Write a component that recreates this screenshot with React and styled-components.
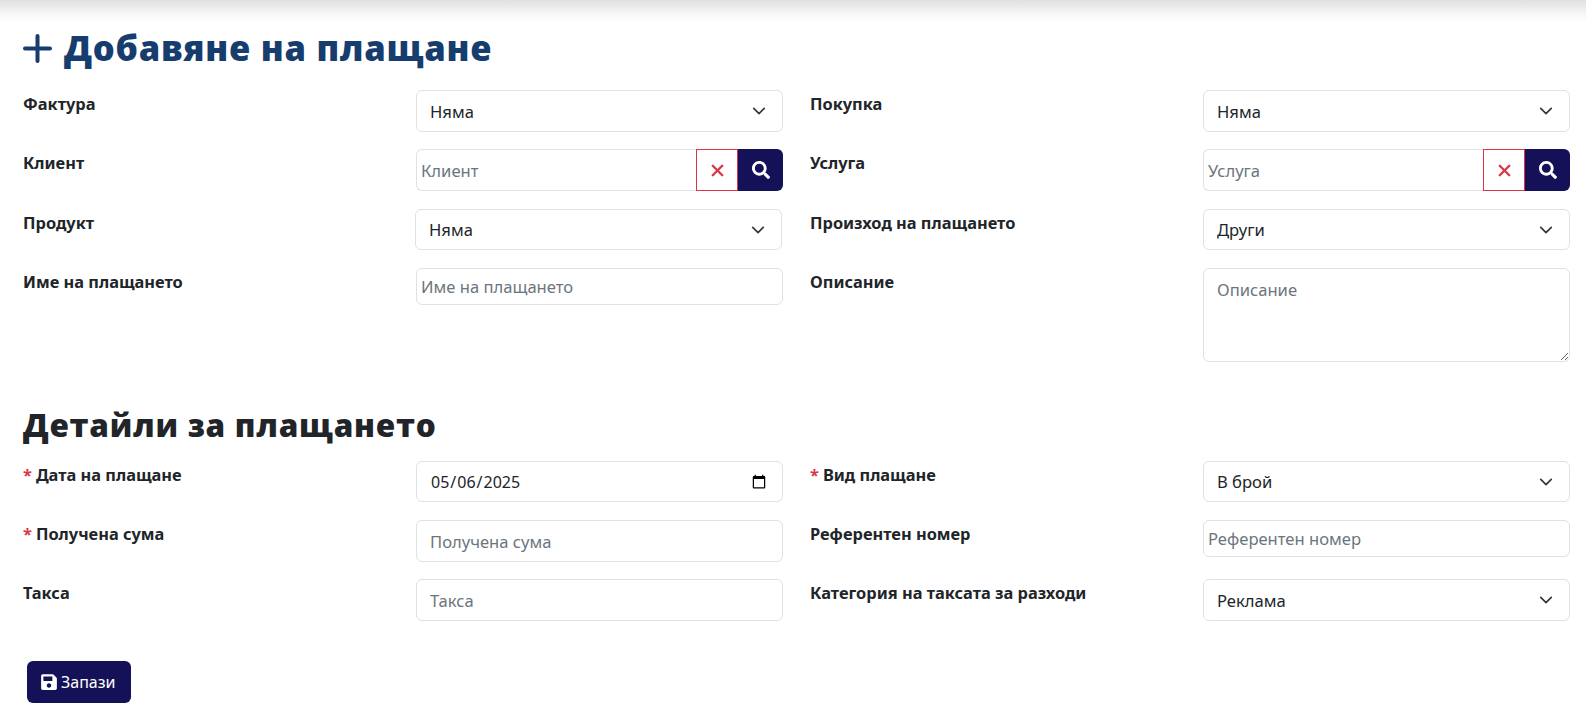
import React from 'react';
import styled, { createGlobalStyle } from 'styled-components';
import { FaSearch, FaSave } from 'react-icons/fa';
import { FiX } from 'react-icons/fi';

const GlobalStyle = createGlobalStyle`
  html, body {
    margin: 0;
    background: #fff;
    color: #212529;
    font-family: "Noto Sans", "Open Sans", "Liberation Sans", sans-serif;
    font-size: 16px;
  }
  * { box-sizing: border-box; }
`;

const navy = '#141159';
const chevron = `url("data:image/svg+xml,%3csvg xmlns='http://www.w3.org/2000/svg' viewBox='0 0 16 16'%3e%3cpath fill='none' stroke='%23343a40' stroke-linecap='round' stroke-linejoin='round' stroke-width='2' d='m2 5 6 6 6-6'/%3e%3c/svg%3e")`;

const TopShade = styled.div`
  height: 22px;
  background: linear-gradient(to bottom, #e0e0e0, #f6f6f6 60%, #ffffff);
`;

const Page = styled.form`
  padding: 0 16px 20px 23px;
`;

const Title = styled.h1`
  display: flex;
  align-items: center;
  gap: 12px;
  height: 52px;
  margin: 0 0 16px;
  color: #163d6e;
  font-family: "Open Sans", Inter, sans-serif;
  font-size: 34.5px;
  font-weight: 800;
  letter-spacing: 0.75px;
  line-height: 52px;
`;

const SubTitle = styled.h2`
  height: 42px;
  margin: 43px 0 15px;
  color: #212529;
  font-family: "Open Sans", Inter, sans-serif;
  font-size: 31.5px;
  font-weight: 800;
  letter-spacing: 0.75px;
  line-height: 42px;
`;

const Grid = styled.div`
  display: grid;
  grid-template-columns: 760px 760px;
  column-gap: 27px;
`;

const Column = styled.div`
  display: flex;
  flex-direction: column;
`;

const Field = styled.div`
  display: grid;
  grid-template-columns: 393px 1fr;
  height: ${(p) => p.$h || 59}px;
`;

const Label = styled.label`
  padding-top: 2px;
  font-size: 16.4px;
  font-weight: 700;
  line-height: 24px;
  color: #212529;
`;

const Star = styled.span`
  color: #dc3545;
  margin-right: 4px;
`;

const controlBase = `
  display: block;
  width: 100%;
  border: 1px solid #dee2e6;
  border-radius: 6px;
  background-color: #fff;
  color: #212529;
  font-family: inherit;
  font-size: 16.6px;
  outline: none;
  &::placeholder { color: #6c757d; opacity: 1; }
`;

const Input = styled.input`
  ${controlBase}
  height: ${(p) => p.$h || 42}px;
  padding: 0 ${(p) => (p.$tight ? 4 : 13)}px;
  &[type='date'] { font-size: 16px; }
`;

const Select = styled.select`
  ${controlBase}
  height: ${(p) => p.$h || 42}px;
  margin-left: ${(p) => p.$shift || 0}px;
  padding: 0 36px 0 13px;
  appearance: none;
  background-image: ${chevron};
  background-repeat: no-repeat;
  background-position: right 16px center;
  background-size: 14px 14px;
`;

const TextArea = styled.textarea`
  ${controlBase}
  height: 94px;
  padding: 9px 13px;
  resize: vertical;
`;

const LookupGroup = styled.div`
  display: flex;
  height: 42px;
`;

const LookupInput = styled.input`
  ${controlBase}
  flex: 1;
  min-width: 0;
  height: 42px;
  padding: 0 4px;
  border-right: 0;
  border-radius: 6px 0 0 6px;
`;

const ClearButton = styled.button`
  display: flex;
  align-items: center;
  justify-content: center;
  width: 42px;
  padding: 0;
  border: 1px solid #dc3545;
  background: #fff;
  color: #dc3545;
  font-size: 19px;
`;

const SearchButton = styled.button`
  display: flex;
  align-items: center;
  justify-content: center;
  width: 45px;
  padding: 0;
  border: 0;
  border-radius: 0 6px 6px 0;
  background: ${navy};
  color: #fff;
  font-size: 18px;
`;

const SaveBar = styled.div`
  margin: 40px 0 0 4px;
`;

const SaveButton = styled.button`
  display: inline-flex;
  align-items: center;
  gap: 3px;
  height: 42px;
  padding: 0 16px 0 13px;
  border: 0;
  border-radius: 6px;
  background: ${navy};
  color: #fff;
  font-family: inherit;
  font-size: 16px;
  svg { font-size: 18px; }
`;

const PlusIcon = () => (
  <svg width="29" height="29" viewBox="0 0 29 29" fill="none" stroke="currentColor" strokeWidth="4" strokeLinecap="round">
    <path d="M14.5 2v25M2 14.5h25" />
  </svg>
);

const Lookup = ({ placeholder }) => (
  <LookupGroup>
    <LookupInput placeholder={placeholder} />
    <ClearButton type="button"><FiX strokeWidth={3} /></ClearButton>
    <SearchButton type="button"><FaSearch /></SearchButton>
  </LookupGroup>
);

const Choice = ({ value, ...rest }) => (
  <Select defaultValue={value} {...rest}>
    <option>{value}</option>
  </Select>
);

export default function App() {
  return (
    <>
      <GlobalStyle />
      <TopShade />
      <Page onSubmit={(e) => e.preventDefault()}>
        <Title><PlusIcon />Добавяне на плащане</Title>
        <Grid>
          <Column>
            <Field><Label>Фактура</Label><Choice value="Няма" /></Field>
            <Field $h={60}><Label>Клиент</Label><Lookup placeholder="Клиент" /></Field>
            <Field><Label>Продукт</Label><Choice value="Няма" $h={41} $shift={-1} /></Field>
            <Field $h={93}><Label>Име на плащането</Label><Input $h={37} $tight placeholder="Име на плащането" /></Field>
          </Column>
          <Column>
            <Field><Label>Покупка</Label><Choice value="Няма" /></Field>
            <Field $h={60}><Label>Услуга</Label><Lookup placeholder="Услуга" /></Field>
            <Field><Label>Произход на плащането</Label><Choice value="Други" $h={41} /></Field>
            <Field $h={93}><Label>Описание</Label><TextArea placeholder="Описание" /></Field>
          </Column>
        </Grid>
        <SubTitle>Детайли за плащането</SubTitle>
        <Grid>
          <Column>
            <Field><Label><Star>*</Star>Дата на плащане</Label><Input $h={41} type="date" defaultValue="2025-05-06" /></Field>
            <Field><Label><Star>*</Star>Получена сума</Label><Input placeholder="Получена сума" /></Field>
            <Field $h={42}><Label>Такса</Label><Input placeholder="Такса" /></Field>
          </Column>
          <Column>
            <Field><Label><Star>*</Star>Вид плащане</Label><Choice value="В брой" $h={41} /></Field>
            <Field><Label>Референтен номер</Label><Input $h={37} $tight placeholder="Референтен номер" /></Field>
            <Field $h={42}><Label>Категория на таксата за разходи</Label><Choice value="Реклама" /></Field>
          </Column>
        </Grid>
        <SaveBar>
          <SaveButton type="submit"><FaSave />Запази</SaveButton>
        </SaveBar>
      </Page>
    </>
  );
}
